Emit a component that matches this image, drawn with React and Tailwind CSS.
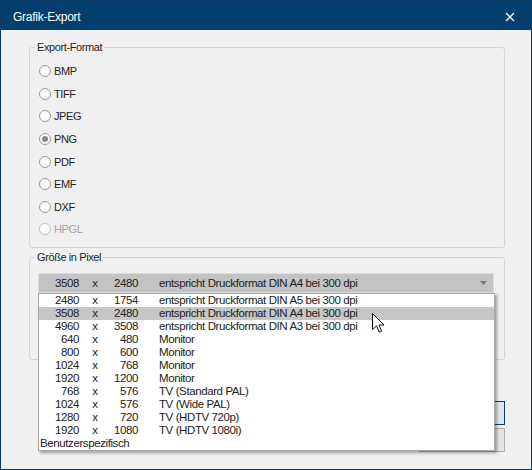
import React from 'react';

const FONT = { fontFamily: '"Liberation Sans", Arial, sans-serif' };

const formats = [
  { name: 'BMP' },
  { name: 'TIFF' },
  { name: 'JPEG' },
  { name: 'PNG', checked: true },
  { name: 'PDF' },
  { name: 'EMF' },
  { name: 'DXF' },
  { name: 'HPGL', disabled: true },
];

const sizes = [
  ['2480', '1754', 'entspricht Druckformat DIN A5 bei 300 dpi'],
  ['3508', '2480', 'entspricht Druckformat DIN A4 bei 300 dpi'],
  ['4960', '3508', 'entspricht Druckformat DIN A3 bei 300 dpi'],
  ['640', '480', 'Monitor'],
  ['800', '600', 'Monitor'],
  ['1024', '768', 'Monitor'],
  ['1920', '1200', 'Monitor'],
  ['768', '576', 'TV (Standard PAL)'],
  ['1024', '576', 'TV (Wide PAL)'],
  ['1280', '720', 'TV (HDTV 720p)'],
  ['1920', '1080', 'TV (HDTV 1080i)'],
];

function Radio({ name, checked, disabled }) {
  return (
    <div className="flex items-center h-[22.6px] gap-[3px]">
      <span
        className={`flex items-center justify-center w-[12px] h-[12px] rounded-full border bg-[#fbfbfb] ${
          disabled ? 'border-[#c4c4c4]' : 'border-[#9a9a9a]'
        }`}
      >
        {checked && <span className="w-[6px] h-[6px] rounded-full bg-[#8a8a8a]" />}
      </span>
      <span className={`text-[11px] tracking-[-0.4px] leading-[14px] ${disabled ? 'text-[#a3a3a3]' : 'text-[#1e1e1e]'}`}>
        {name}
      </span>
    </div>
  );
}

function SizeRow({ w, h, label, active }) {
  return (
    <div className={`flex items-center h-[13px] text-[11.5px] tracking-[-0.4px] leading-[13px] text-[#222] ${active ? 'bg-[#c6c6c6]' : ''}`}>
      <span className="w-[40px] text-right">{w}</span>
      <span className="w-[32px] text-center">x</span>
      <span className="w-[27px] text-right">{h}</span>
      <span className="ml-[21px] whitespace-nowrap">{label}</span>
    </div>
  );
}

export default function App() {
  return (
    <div style={FONT} className="relative w-[532px] h-[470px] overflow-hidden border border-[#0d3d66] bg-[#f0f0f0] flex flex-col">
      {/* Title bar */}
      <div className="flex items-center justify-between h-[29px] bg-[#003f6e] pl-[12px] pr-[16px] pt-[3px] shrink-0">
        <span className="text-white text-[12px] tracking-[-0.25px]">Grafik-Export</span>
        <svg width="10" height="10" viewBox="0 0 10 10">
          <path d="M1 1 L9 9 M9 1 L1 9" stroke="white" strokeWidth="1.3" />
        </svg>
      </div>

      <div className="flex flex-col pl-[28px] pt-[10px] w-[504px]">
        {/* Export-Format */}
        <fieldset className="h-[208px] border border-[#d5d5d5] rounded-[3px] px-0">
          <legend className="ml-[5px] px-[2px] text-[11px] tracking-[-0.4px] leading-[14px] text-[#1e1e1e]">
            Export-Format
          </legend>
          <div className="flex flex-col pl-[9px] pt-[6px]">
            {formats.map((f) => (
              <Radio key={f.name} {...f} />
            ))}
          </div>
        </fieldset>

        {/* Größe in Pixel */}
        <fieldset className="mt-[2px] h-[110px] border border-[#d5d5d5] rounded-[3px] px-0">
          <legend className="ml-[5px] px-[2px] text-[11px] tracking-[-0.4px] leading-[14px] text-[#1e1e1e]">
            Größe in Pixel
          </legend>
          <div className="relative ml-[8px] mt-[9px] w-[456px]">
            <div className="flex items-center h-[20px] border border-[#dcdcdc] bg-[#c3c3c3] pr-[6px]">
              <div className="flex-1">
                <SizeRow w="3508" h="2480" label="entspricht Druckformat DIN A4 bei 300 dpi" />
              </div>
              <svg width="7" height="4" viewBox="0 0 7 4">
                <path d="M0 0 L7 0 L3.5 4 Z" fill="#7a7a7a" />
              </svg>
            </div>

            {/* open dropdown list */}
            <div className="absolute left-0 top-full z-10 w-[457px] border border-[#a8a8a8] bg-white shadow-[2px_2px_3px_rgba(0,0,0,0.35)]">
              {sizes.map(([w, h, label], i) => (
                <SizeRow key={i} w={w} h={h} label={label} active={i === 1} />
              ))}
              <div className="h-[13px] pl-[1px] text-[11.5px] tracking-[-0.4px] leading-[13px] text-[#222]">
                Benutzerspezifisch
              </div>
            </div>
          </div>
        </fieldset>

        {/* Buttons (hidden behind list) */}
        <div className="flex flex-col items-end gap-[3px] mt-[41px]">
          <div className="w-[86px] h-[24px] border border-[#003f6e] bg-[#e5e5e5]" />
          <div className="w-[86px] h-[24px] border border-[#adadad] bg-[#e5e5e5]" />
        </div>
      </div>

      {/* mouse pointer */}
      <svg className="absolute left-[371px] top-[312px] z-20" width="13" height="21" viewBox="0 0 13 21">
        <path d="M0.5 0.5 L0.5 16.5 L4.5 12.8 L7.2 19.2 L9.6 18.2 L7 12 L12 12 Z" fill="white" stroke="#111" strokeWidth="1" strokeLinejoin="round" />
      </svg>
    </div>
  );
}
